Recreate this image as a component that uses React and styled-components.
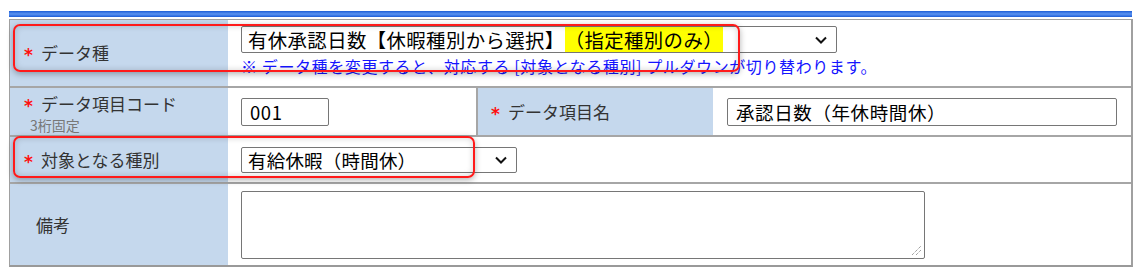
import React from "react";
import styled, { createGlobalStyle } from "styled-components";

const GlobalStyle = createGlobalStyle`
  html, body {
    margin: 0;
    padding: 0;
    background: #ffffff;
  }
  body {
    font-family: "Noto Sans CJK JP", "Noto Sans", sans-serif;
    color: #333;
  }
`;

const Page = styled.div`
  width: 1136px;
  height: 275px;
  padding-top: 11px;
  box-sizing: border-box;
  overflow: hidden;
`;

const TopBar = styled.div`
  margin-left: 9px;
  width: 1123px;
  height: 6px;
  background: linear-gradient(#1c5cd6, #5b93f0 50%, #1c5cd6);
`;

const Form = styled.div`
  position: relative;
  margin: 2px 0 0 9px;
  width: 1124px;
  box-sizing: border-box;
  border: 1px solid #a0a0a0;
  border-right-width: 2px;
  border-bottom: 2px solid #999;
`;

const Row = styled.div`
  display: grid;
  grid-template-columns: 218px 248px 237px 1fr;
  height: ${(p) => p.$h}px;
  box-sizing: border-box;
  border-top: ${(p) => (p.$first ? "none" : "2px solid #a6a6a6")};
`;

const Label = styled.div`
  background: #c5d8ed;
  display: flex;
  flex-direction: column;
  justify-content: center;
  padding-left: ${(p) => p.$pad || 14}px;
  box-sizing: border-box;
  border-left: ${(p) => (p.$divider ? "2px solid #a6a6a6" : "none")};
  padding-top: ${(p) => p.$top || 0}px;
`;

const LabelText = styled.div`
  display: flex;
  align-items: center;
  font-size: 17px;
  line-height: 22px;
  color: #333;
  white-space: nowrap;
`;

const Star = styled.span`
  color: #ff1010;
  font-family: "DejaVu Sans", sans-serif;
  font-weight: bold;
  font-size: 17px;
  width: 17px;
  position: relative;
  top: 2px;
`;

const SubText = styled.div`
  font-size: 14px;
  line-height: 16px;
  color: #777;
  padding-left: 6px;
  margin-top: 2px;
`;

const Value = styled.div`
  grid-column: ${(p) => p.$span || "auto"};
  display: flex;
  flex-direction: column;
  justify-content: ${(p) => (p.$top ? "flex-start" : "center")};
  padding: ${(p) => (p.$top ? "6px 0 0 13px" : "0 0 0 13px")};
  padding-left: ${(p) => p.$left || 13}px;
  box-sizing: border-box;
  background: #fff;
`;

const SelectBox = styled.div`
  width: ${(p) => p.$w}px;
  height: ${(p) => p.$h || 27}px;
  box-sizing: border-box;
  border: 1px solid #767676;
  border-radius: 2px;
  display: flex;
  align-items: stretch;
  padding-left: 6px;
  color: #000;
  font-size: ${(p) => p.$fs || 18.5}px;
  letter-spacing: ${(p) => p.$ls || 0}px;
  white-space: nowrap;
`;

const SelectText = styled.span`
  display: flex;
  align-items: center;
  flex: 1;
`;

const Highlight = styled.span`
  background: #ffff00;
  display: flex;
  align-items: center;
  align-self: stretch;
`;

const Chevron = styled.svg`
  width: 12px;
  align-self: center;
  margin-right: 9px;
`;

const Note = styled.div`
  margin-top: 4px;
  font-size: 16px;
  line-height: 18px;
  letter-spacing: 0.6px;
  color: #1414ff;
  white-space: nowrap;
`;

const TextInput = styled.div`
  width: ${(p) => p.$w}px;
  height: 28px;
  box-sizing: border-box;
  border: 1px solid #767676;
  border-radius: 2px;
  padding-left: 8px;
  display: flex;
  align-items: center;
  font-size: 18.5px;
  letter-spacing: 0.6px;
  color: #000;
  white-space: nowrap;
`;

const TextArea = styled.div`
  position: relative;
  width: 684px;
  height: 68px;
  box-sizing: border-box;
  border: 1px solid #767676;
  border-radius: 2px;
`;

const Grip = styled.svg`
  position: absolute;
  right: 2px;
  bottom: 2px;
  width: 12px;
  height: 12px;
`;

const Mark = styled.div`
  position: absolute;
  left: ${(p) => p.$x}px;
  top: ${(p) => p.$y}px;
  width: ${(p) => p.$w}px;
  height: ${(p) => p.$h}px;
  box-sizing: border-box;
  border: 2px solid #ff1a1a;
  border-radius: 7px;
  box-shadow: 0 2px 6px rgba(0, 0, 0, 0.3), inset 0 0 6px rgba(0, 0, 0, 0.18);
  pointer-events: none;
`;

const Down = () => (
  <Chevron viewBox="0 0 12 8">
    <polyline points="1,1.5 6,6.5 11,1.5" fill="none" stroke="#111" strokeWidth="2" />
  </Chevron>
);

const App = () => {
  return (
    <Page>
      <GlobalStyle />
      <TopBar />
      <Form>
        <Row $first $h={66}>
          <Label>
            <LabelText>
              <Star>*</Star>データ種
            </LabelText>
          </Label>
          <Value $span="2 / -1" $top>
            <SelectBox $w={596} $fs={19.4} $ls={0.4}>
              <SelectText>
                有休承認日数【休暇種別から選択】
                <Highlight>（指定種別のみ）</Highlight>
              </SelectText>
              <Down />
            </SelectBox>
            <Note>※ データ種を変更すると、対応する [対象となる種別] プルダウンが切り替わります。</Note>
          </Value>
        </Row>
        <Row $h={49}>
          <Label $top={2}>
            <LabelText>
              <Star>*</Star>データ項目コード
            </LabelText>
            <SubText>3桁固定</SubText>
          </Label>
          <Value>
            <TextInput $w={88}>001</TextInput>
          </Value>
          <Label $divider $pad={13}>
            <LabelText>
              <Star>*</Star>データ項目名
            </LabelText>
          </Label>
          <Value $left={14}>
            <TextInput $w={390}>承認日数（年休時間休）</TextInput>
          </Value>
        </Row>
        <Row $h={47}>
          <Label>
            <LabelText>
              <Star>*</Star>対象となる種別
            </LabelText>
          </Label>
          <Value $span="2 / -1">
            <SelectBox $w={276} $h={26} $ls={0.2}>
              <SelectText>有給休暇（時間休）</SelectText>
              <Down />
            </SelectBox>
          </Value>
        </Row>
        <Row $h={83}>
          <Label $pad={26}>
            <LabelText>備考</LabelText>
          </Label>
          <Value $span="2 / -1">
            <TextArea>
              <Grip viewBox="0 0 12 12">
                <line x1="2" y1="11" x2="11" y2="2" stroke="#777" strokeWidth="1" strokeDasharray="1 1" />
                <line x1="6" y1="11" x2="11" y2="6" stroke="#777" strokeWidth="1" strokeDasharray="1 1" />
              </Grip>
            </TextArea>
          </Value>
        </Row>
        <Mark $x={3} $y={4} $w={727} $h={48} />
        <Mark $x={3} $y={116} $w={462} $h={42} />
      </Form>
    </Page>
  );
};

export default App;
